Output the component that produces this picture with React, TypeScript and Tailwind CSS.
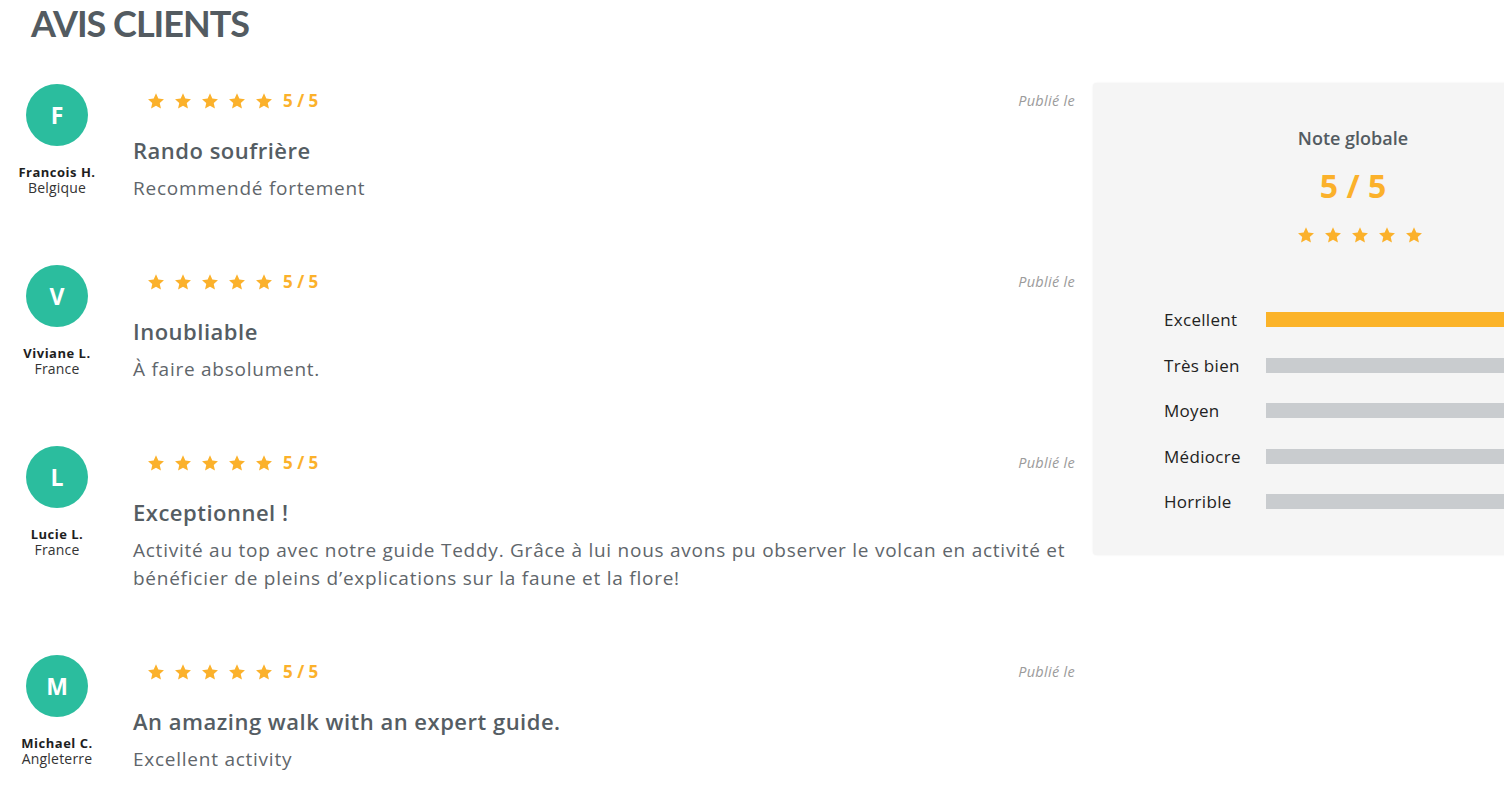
import React from "react";

const Star = ({ size = 18 }: { size?: number }) => (
  <svg width={size} height={size} viewBox="0 0 24 24" className="shrink-0">
    <path
      d="M12 1.8l3.1 6.9 7.5.8-5.6 5.1 1.6 7.4L12 18.2 5.4 22l1.6-7.4L1.4 9.5l7.5-.8z"
      fill="#fbb12b"
    />
  </svg>
);

type Review = {
  letter: string;
  name: string;
  country: string;
  title: string;
  body: string;
};

const reviews: Review[] = [
  { letter: "F", name: "Francois H.", country: "Belgique", title: "Rando soufrière", body: "Recommendé fortement" },
  { letter: "V", name: "Viviane L.", country: "France", title: "Inoubliable", body: "À faire absolument." },
  {
    letter: "L",
    name: "Lucie L.",
    country: "France",
    title: "Exceptionnel !",
    body: "Activité au top avec notre guide Teddy. Grâce à lui nous avons pu observer le volcan en activité et bénéficier de pleins d’explications sur la faune et la flore!",
  },
  { letter: "M", name: "Michael C.", country: "Angleterre", title: "An amazing walk with an expert guide.", body: "Excellent activity" },
];

const bars = [
  { label: "Excellent", active: true },
  { label: "Très bien", active: false },
  { label: "Moyen", active: false },
  { label: "Médiocre", active: false },
  { label: "Horrible", active: false },
];

function ReviewItem({ r }: { r: Review }) {
  return (
    <div className="flex">
      <div className="ml-[17px] flex w-[80px] shrink-0 flex-col items-center">
        <div className="flex h-[62px] w-[62px] items-center justify-center rounded-full bg-[#2bbd9e] text-[23px] font-bold text-white">
          {r.letter}
        </div>
        <div className="mt-[18px] whitespace-nowrap text-[13px] font-bold leading-[16px] tracking-[0.5px] text-[#1e1e1e]">{r.name}</div>
        <div className="whitespace-nowrap text-[14px] leading-[16px] tracking-[0.2px] text-[#333]">{r.country}</div>
      </div>
      <div className="ml-[36px] w-[942px] shrink-0">
        <div className="flex h-[33px] items-center justify-between">
          <div className="flex items-center gap-[9px] pl-[14px]">
            <Star />
            <Star />
            <Star />
            <Star />
            <Star />
            <span className="ml-[1px] text-[17px] font-bold text-[#fbb12b]">5 / 5</span>
          </div>
          <span className="text-[14.5px] italic tracking-[0.3px] text-[#9b9b9b]">Publié le</span>
        </div>
        <div className="mt-[18px] text-[22px] font-semibold leading-[30px] tracking-[0.5px] text-[#555d63]">{r.title}</div>
        <div className="mt-[9px] text-[19px] leading-[28px] tracking-[0.75px] text-[#5f666b]">{r.body}</div>
      </div>
    </div>
  );
}

export default function App() {
  return (
    <div
      className="h-[795px] w-[1504px] overflow-hidden bg-white"
      style={{ fontFamily: "'Open Sans', 'Noto Sans', sans-serif" }}
    >
      <h1
        className="pl-[31px] pt-[5px] text-[36px] font-bold leading-[36px] tracking-[-1px] text-[#535b61]"
        style={{ fontFamily: "Lato, 'Open Sans', sans-serif" }}
      >
        AVIS CLIENTS
      </h1>
      <div className="mt-[43px] flex items-start">
        <div className="flex w-[1075px] shrink-0 flex-col gap-[63px]">
          {reviews.map((r) => (
            <ReviewItem key={r.name} r={r} />
          ))}
        </div>
        <div className="ml-[18px] -mt-[1px] w-[520px] shrink-0 rounded-[4px] bg-[#f5f5f5] pb-[30px] pt-[43px] shadow-[0_0_2px_rgba(0,0,0,0.08)]">
          <div className="text-center text-[18px] font-semibold leading-[24px] text-[#535b61]">Note globale</div>
          <div className="mt-[16px] text-center text-[32px] font-bold leading-[40px] text-[#fbb12b]">5 / 5</div>
          <div className="mt-[20px] flex justify-center gap-[9px] pl-[14px]">
            <Star />
            <Star />
            <Star />
            <Star />
            <Star />
          </div>
          <div className="mt-[53px] flex flex-col pl-[71px]">
            {bars.map((b) => (
              <div key={b.label} className="flex h-[45.5px] items-center">
                <span className="w-[102px] shrink-0 text-[17px] tracking-[0.3px] text-[#222]">{b.label}</span>
                <div className={`h-[15px] flex-1 ${b.active ? "bg-[#fbb329]" : "bg-[#c9cccf]"}`} />
              </div>
            ))}
          </div>
        </div>
      </div>
    </div>
  );
}
